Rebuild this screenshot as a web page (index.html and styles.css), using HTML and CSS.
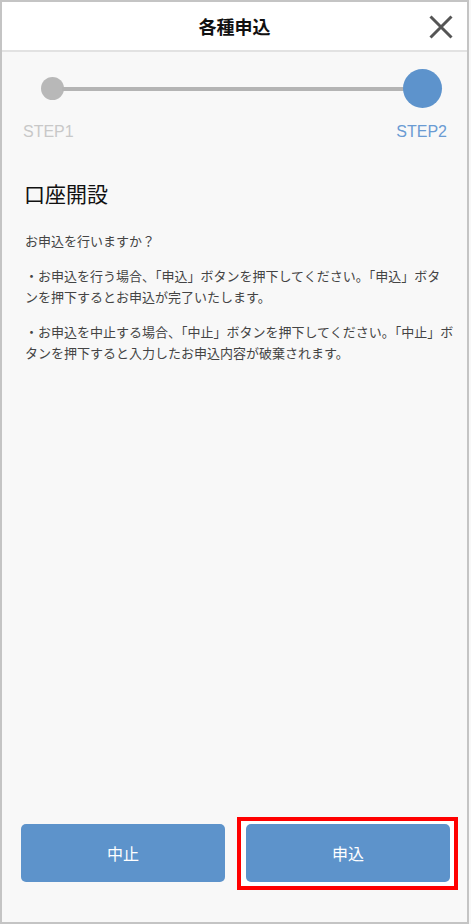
FILE: index.html
```html
<!DOCTYPE html>
<html lang="ja">
<head>
    <meta charset="UTF-8">
    <meta name="viewport" content="width=device-width, initial-scale=1.0">
    <title>各種申込</title>
    <link rel="stylesheet" href="styles.css">
</head>
<body>
    <div class="frame">
        <header class="header">
            <span></span>
            <h1 class="header-title">各種申込</h1>
            <button class="close" aria-label="閉じる">
                <svg width="24" height="24" viewBox="0 0 24 24">
                    <path d="M1.5 1.5 L22.5 22.5 M22.5 1.5 L1.5 22.5" stroke="#555" stroke-width="3" fill="none"/>
                </svg>
            </button>
        </header>

        <main class="content">
            <div class="stepper">
                <span class="dot dot-done"></span>
                <span class="bar"></span>
                <span class="dot dot-current"></span>
            </div>
            <div class="step-labels">
                <span class="step-label">STEP1</span>
                <span class="step-label active">STEP2</span>
            </div>

            <h2 class="title">口座開設</h2>

            <div class="message">
                <p>お申込を行いますか？</p>
                <p>・お申込を行う場合、「申込」ボタンを押下してください。「申込」ボタ<br>ンを押下するとお申込が完了いたします。</p>
                <p>・お申込を中止する場合、「中止」ボタンを押下してください。「中止」ボ<br>タンを押下すると入力したお申込内容が破棄されます。</p>
            </div>
        </main>

        <footer class="actions">
            <button class="btn">中止</button>
            <div class="highlight">
                <button class="btn">申込</button>
            </div>
        </footer>
    </div>
</body>
</html>
```

FILE: styles.css
```css
html, body {
    margin: 0;
    padding: 0;
    background: #f8f8f8;
}
body {
    font-family: "Noto Sans CJK JP", "Noto Sans", sans-serif;
    color: #333;
}
.frame {
    box-sizing: border-box;
    width: 469px;
    height: 924px;
    border: 2px solid #c4c4c4;
    display: flex;
    flex-direction: column;
    background: #f8f8f8;
}
.header {
    height: 48px;
    background: #fff;
    border-bottom: 2px solid #e2e2e2;
    display: grid;
    grid-template-columns: 1fr auto 1fr;
    align-items: center;
}
.header-title {
    margin: 0;
    font-size: 18px;
    font-weight: bold;
    color: #111;
    line-height: 24px;
}
.close {
    justify-self: end;
    margin-right: 14px;
    padding: 0;
    border: none;
    background: none;
    width: 24px;
    height: 24px;
    display: flex;
    margin-top: 1px;
}
.content {
    flex: 1;
}
.stepper {
    display: flex;
    align-items: center;
    padding: 17px 25px 0 39px;
    height: 39px;
}
.dot {
    border-radius: 50%;
    flex: none;
}
.dot-done {
    width: 23px;
    height: 23px;
    background: #b8b8b8;
}
.dot-current {
    width: 39px;
    height: 39px;
    background: #5d93cc;
}
.bar {
    flex: 1;
    height: 4px;
    background: #b4b4b4;
    margin: 0 -2px;
}
.step-labels {
    display: flex;
    justify-content: space-between;
    padding: 15px 20px 0 21px;
    font-family: "Liberation Sans", Arial, sans-serif;
    font-size: 16px;
    line-height: 18px;
    color: #c8c8c8;
}
.step-label.active {
    color: #6a9bd3;
}
.title {
    margin: 37px 0 0;
    padding-left: 22px;
    font-size: 21px;
    font-weight: normal;
    line-height: 30px;
    color: #111;
}
.message {
    padding: 0 15px 0 23px;
    margin-top: 22px;
    font-size: 13px;
    line-height: 21px;
    color: #444;
}
.message p {
    margin: 0 0 14px;
    white-space: nowrap;
}
.actions {
    display: grid;
    grid-template-columns: 1fr 1fr;
    gap: 21px;
    padding: 0 17px 40px 19px;
}
.btn {
    height: 58px;
    border: none;
    border-radius: 5px;
    background: #5d93cb;
    color: #fff;
    font-family: "Noto Sans CJK JP", "Noto Sans", sans-serif;
    font-size: 16px;
    cursor: pointer;
}
.highlight {
    display: flex;
    margin: -7px -8px -8px -9px;
    padding: 3px 4px 4px 5px;
    border: 4px solid #ff0000;
    background: #fff;
}
.highlight .btn {
    flex: 1;
}
```
